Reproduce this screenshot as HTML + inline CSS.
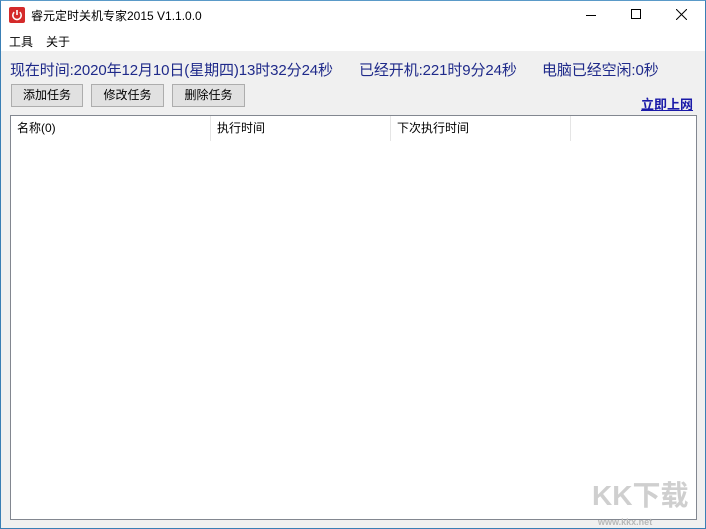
<!DOCTYPE html>
<html><head><meta charset="utf-8"><style>
*{margin:0;padding:0;box-sizing:border-box}
body{width:706px;height:529px;overflow:hidden;font-family:"Liberation Sans","Noto Sans CJK SC",sans-serif;background:#f0f0f0;position:relative;font-size:12px;color:#000}
.win{position:absolute;left:0;top:0;width:706px;height:529px;border:1px solid #3a7fb5;border-top:1px solid #5a9ac8}
.title{position:absolute;left:0;top:0;width:706px;height:30px;background:#fff}
.menu{position:absolute;left:0;top:30px;width:706px;height:21px;background:#fff}
.abs{position:absolute;white-space:nowrap}
.info{color:#1f2a8a;font-size:15px;top:59px;letter-spacing:-0.1px}
.btn{position:absolute;top:84px;height:23px;background:#e1e1e1;border:1px solid #adadad;text-align:center;line-height:21px;font-size:12px}
.list{position:absolute;left:10px;top:115px;width:687px;height:405px;background:#fff;border:1px solid #828790}
.hd{position:absolute;top:0;height:25px;border-right:1px solid #e5e5e5;line-height:25px;padding-left:6px;font-size:12px}
</style></head><body>
<div class="title"></div>
<div class="menu"></div>
<svg class="abs" style="left:9px;top:7px" width="16" height="16"><rect width="16" height="16" rx="2" fill="#d42a2a"/><path d="M5.2 5.2A4.2 4.2 0 1 0 10.8 5.2" fill="none" stroke="#fff" stroke-width="1.6"/><path d="M8 3v5" stroke="#fff" stroke-width="1.6"/></svg>
<div class="abs" style="left:31px;top:7px;font-size:12px">睿元定时关机专家2015 V1.1.0.0</div>
<div class="abs" style="left:586px;top:15px;width:10px;height:1px;background:#000"></div>
<div class="abs" style="left:631px;top:9px;width:10px;height:10px;border:1px solid #000"></div>
<svg class="abs" style="left:676px;top:9px" width="11" height="11"><path d="M0 0L11 11M11 0L0 11" stroke="#000" stroke-width="1"/></svg>
<div class="abs" style="left:9px;top:33px;font-size:12px">工具</div>
<div class="abs" style="left:46px;top:33px;font-size:12px">关于</div>
<div class="abs info" style="left:10px">现在时间:2020年12月10日(星期四)13时32分24秒</div>
<div class="abs info" style="left:359px">已经开机:221时9分24秒</div>
<div class="abs info" style="left:542px">电脑已经空闲:0秒</div>
<div class="btn" style="left:11px;width:72px">添加任务</div>
<div class="btn" style="left:91px;width:73px">修改任务</div>
<div class="btn" style="left:172px;width:73px">删除任务</div>
<div class="abs" style="left:641px;top:94px;font-size:13px;font-weight:bold;color:#1a1aa8;text-decoration:underline">立即上网</div>
<div class="list">
<div class="hd" style="left:0;width:200px">名称(0)</div>
<div class="hd" style="left:200px;width:180px">执行时间</div>
<div class="hd" style="left:380px;width:180px">下次执行时间</div>
</div>
<div class="abs" style="left:592px;top:474px;font-size:28px;font-weight:bold;color:#cfcfcf">KK下载</div>
<div class="abs" style="left:598px;top:517px;font-size:9px;font-weight:bold;color:#b8b8b8">www.kkx.net</div>
<div class="win"></div>
</body></html>
